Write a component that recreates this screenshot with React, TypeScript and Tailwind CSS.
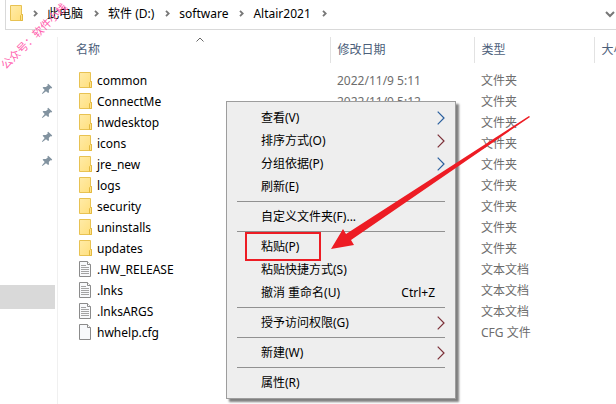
import { Fragment } from "react";

type FileKind = "folder" | "text" | "blank";

const crumbs = ["此电脑", "软件 (D:)", "software", "Altair2021"];

const files: { name: string; date?: string; type: string; kind: FileKind }[] = [
  { name: "common", date: "2022/11/9 5:11", type: "文件夹", kind: "folder" },
  { name: "ConnectMe", date: "2022/11/9 5:12", type: "文件夹", kind: "folder" },
  { name: "hwdesktop", type: "文件夹", kind: "folder" },
  { name: "icons", type: "文件夹", kind: "folder" },
  { name: "jre_new", type: "文件夹", kind: "folder" },
  { name: "logs", type: "文件夹", kind: "folder" },
  { name: "security", type: "文件夹", kind: "folder" },
  { name: "uninstalls", type: "文件夹", kind: "folder" },
  { name: "updates", type: "文件夹", kind: "folder" },
  { name: ".HW_RELEASE", type: "文本文档", kind: "text" },
  { name: ".lnks", type: "文本文档", kind: "text" },
  { name: ".lnksARGS", type: "文本文档", kind: "text" },
  { name: "hwhelp.cfg", type: "CFG 文件", kind: "blank" },
];

type MenuEntry = { label: string; submenu?: "blue" | "red"; shortcut?: string; marked?: boolean };

const menuGroups: MenuEntry[][] = [
  [
    { label: "查看(V)", submenu: "blue" },
    { label: "排序方式(O)", submenu: "red" },
    { label: "分组依据(P)", submenu: "blue" },
    { label: "刷新(E)" },
  ],
  [{ label: "自定义文件夹(F)..." }],
  [
    { label: "粘贴(P)", marked: true },
    { label: "粘贴快捷方式(S)" },
    { label: "撤消 重命名(U)", shortcut: "Ctrl+Z" },
  ],
  [{ label: "授予访问权限(G)", submenu: "red" }],
  [{ label: "新建(W)", submenu: "red" }],
  [{ label: "属性(R)" }],
];

function FolderIcon() {
  return (
    <svg width="14" height="17" viewBox="0 0 14 17" className="shrink-0" aria-hidden="true">
      <defs>
        <linearGradient id="folder" x1="0" y1="0" x2="1" y2="1">
          <stop offset="0" stopColor="#ffeba8" />
          <stop offset="1" stopColor="#ffdf7c" />
        </linearGradient>
      </defs>
      <path d="M.5.5h11v9h1v6H.5z" fill="url(#folder)" stroke="#e8c252" />
      <path d="M10.5 15.5v-5l1-1h1v6z" fill="#ffe28a" stroke="#e3b93f" />
    </svg>
  );
}

function DocumentIcon({ lines }: { lines: boolean }) {
  return (
    <svg width="14" height="17" viewBox="0 0 14 17" className="shrink-0" aria-hidden="true">
      <path d="M.5.5h8l3 3v12H.5z" fill="#f8f9fb" stroke="#8b8b8b" />
      <path d="M8.5.5v3h3" fill="#fff" stroke="#8b8b8b" />
      {lines && <path d="M2 4.5h5M2 6.5h8M2 8.5h8M2 10.5h8M2 12.5h8" stroke="#a3a3a3" />}
    </svg>
  );
}

function PinIcon() {
  return (
    <svg width="12" height="12" viewBox="0 0 12 12" aria-hidden="true">
      <path
        d="M7.2.8 11.2 4.6 10.4 5.4 9.4 5.2 7.8 6.9 8 9.2 7.2 10 5 8.2 1.4 10.9.9 10.4 3.7 7 1.6 4.8 2.4 4 4.9 4.1 6.8 2.5 6.4 1.5z"
        fill="#8293a0"
      />
    </svg>
  );
}

function CrumbArrow() {
  return (
    <svg width="5" height="7" viewBox="0 0 5 7" aria-hidden="true">
      <path d="M1 .8 3.7 3.5 1 6.2" fill="none" stroke="#777" strokeWidth="1.8" />
    </svg>
  );
}

function SubmenuArrow({ tone }: { tone: "blue" | "red" }) {
  return (
    <svg width="8" height="14" viewBox="0 0 8 14" aria-hidden="true">
      <path
        d="M.7.7 7 7 .7 13.3"
        fill="none"
        stroke={tone === "blue" ? "#2a5f9e" : "#7c3038"}
        strokeWidth="1.2"
      />
    </svg>
  );
}

function AddressBar() {
  return (
    <nav
      aria-label="地址"
      className="ml-[5px] flex h-[30px] items-center border-b border-l border-[#d9d9d9] pr-px pb-0.5 pl-1 text-black"
    >
      <FolderIcon />
      <ol className="flex flex-1 items-center">
        {crumbs.map((crumb) => (
          <li key={crumb} className="flex items-center">
            <span className="flex w-[23px] justify-center">
              <CrumbArrow />
            </span>
            <button type="button" className="pr-0.5">
              {crumb}
            </button>
          </li>
        ))}
        <li className="flex w-[23px] justify-center">
          <CrumbArrow />
        </li>
      </ol>
      <button type="button" aria-label="展开">
        <svg width="10" height="8" viewBox="0 0 10 8" aria-hidden="true">
          <path d="M1 2 5 6 9 2" fill="none" stroke="#777" strokeWidth="2" />
        </svg>
      </button>
    </nav>
  );
}

function QuickAccess() {
  return (
    <aside className="w-[57px] shrink-0 pt-[47px]">
      {[1, 2, 3, 4].map((pin) => (
        <div key={pin} className="flex h-6 items-center justify-end pr-1">
          <PinIcon />
        </div>
      ))}
      <div className="mt-28 mr-0.5 h-6 bg-[#d9d9d9]" />
    </aside>
  );
}

function FileTable() {
  return (
    <table className="w-full min-w-[600px] table-fixed border-collapse text-left">
      <thead>
        <tr className="h-[26px] text-[#4c607a]">
          <th className="relative w-[272px] border-r border-[#e2e2e2] pl-[18px] font-normal">
            名称
            <svg
              width="8"
              height="5"
              viewBox="0 0 8 5"
              className="absolute top-0 left-[138px]"
              aria-hidden="true"
            >
              <path d="M.5 4.5 4 1l3.5 3.5" fill="none" stroke="#666" />
            </svg>
          </th>
          <th className="w-36 border-r border-[#e2e2e2] pl-[7px] font-normal">修改日期</th>
          <th className="w-[120px] border-r border-[#e2e2e2] pl-[7px] font-normal">类型</th>
          <th className="pl-[7px] font-normal">大小</th>
        </tr>
      </thead>
      <tbody className="text-[#6d6d6d] before:block before:h-[7px]">
        {files.map((file) => (
          <tr key={file.name} className="h-[21px]">
            <td className="pl-[21px] text-black">
              <div className="flex items-center gap-1">
                {file.kind === "folder" ? <FolderIcon /> : <DocumentIcon lines={file.kind === "text"} />}
                {file.name}
              </div>
            </td>
            <td className="pl-[7px]">{file.date}</td>
            <td className="pl-[7px]">{file.type}</td>
            <td />
          </tr>
        ))}
      </tbody>
    </table>
  );
}

function ContextMenu() {
  return (
    <div
      role="menu"
      className="absolute top-[101px] left-[226px] w-[230px] border border-[#9d9d9d] bg-[#eeeeee] py-1 text-black shadow-[3px_3px_2px_#00000080]"
    >
      {menuGroups.map((group, index) => (
        <Fragment key={group[0].label}>
          {index > 0 && <hr className="mx-2.5 my-[3px] border-[#919191]" />}
          {group.map((item) => (
            <button
              key={item.label}
              type="button"
              role="menuitem"
              className="relative flex h-[23px] w-full items-center justify-between pr-2.5 pl-[34px]"
            >
              {item.label}
              {item.shortcut && <span className="pr-2.5">{item.shortcut}</span>}
              {item.submenu && <SubmenuArrow tone={item.submenu} />}
              {item.marked && (
                <span className="absolute -top-[3px] left-[18px] h-[29px] w-[76px] border-2 border-[#ed1c24]" />
              )}
            </button>
          ))}
        </Fragment>
      ))}
    </div>
  );
}

export default function App() {
  return (
    <main className="relative flex min-h-screen flex-col overflow-hidden bg-white font-['Noto_Sans','Noto_Sans_CJK_SC',sans-serif] text-[12px] leading-[18px]">
      <AddressBar />
      <div className="flex flex-1">
        <QuickAccess />
        <div className="mt-[7px] min-w-0 flex-1 border-l border-[#f0f0f0]">
          <FileTable />
        </div>
      </div>

      <ContextMenu />

      <svg
        width="200"
        height="134"
        viewBox="0 0 200 134"
        className="pointer-events-none absolute top-[116px] left-[331px]"
        aria-hidden="true"
      >
        <path d="M198 0 199 1 20 124 23 129 0 133 12 113 15 118z" fill="#ed1c24" />
      </svg>

      <p className="pointer-events-none absolute top-[58px] left-[3px] origin-left -rotate-45 text-[11px] whitespace-nowrap text-[#ff5fae]">
        公众号：软件小栈
      </p>
    </main>
  );
}
